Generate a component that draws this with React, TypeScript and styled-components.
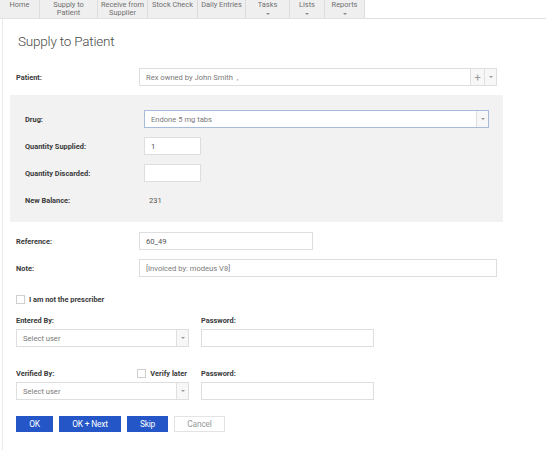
import React from "react";
import styled, { createGlobalStyle } from "styled-components";

const Global = createGlobalStyle`
  html, body { margin: 0; padding: 0; background: #fff; }
  body { font-family: Roboto, "Liberation Sans", Arial, sans-serif; color: #444; }
  * { box-sizing: border-box; }
`;

const Page = styled.div`
  width: 546px;
  height: 450px;
  overflow: hidden;
  background: #fff;
`;

const Nav = styled.nav`
  display: flex;
  height: 19px;
  border-bottom: 1px solid #e2e2e2;
`;

const NavItems = styled.div`
  display: flex;
  background: #efefef;
`;

const NavItem = styled.div<{ $w: number }>`
  width: ${(p) => p.$w}px;
  border-right: 1px solid #dcdcdc;
  display: flex;
  flex-direction: column;
  align-items: center;
  padding-top: 1px;
  font-size: 7.4px;
  line-height: 8px;
  color: #707070;
  text-align: center;
`;

const Caret = styled.span`
  display: block;
  width: 0;
  height: 0;
  margin-top: 4px;
  border-left: 2px solid transparent;
  border-right: 2px solid transparent;
  border-top: 2px solid #8a8a8a;
`;

const Body = styled.div`
  margin-left: 2px;
  border-left: 1px solid #e9e9e9;
  padding-left: 7px;
  height: 431px;
`;

const Content = styled.div`
  width: 493px;
`;

const Title = styled.h1`
  margin: 0;
  padding: 14px 0 0 8px;
  height: 49px;
  font-size: 13.5px;
  font-weight: 300;
  color: #4a4a4a;
  letter-spacing: -0.2px;
`;

const Row = styled.div<{ $label: number; $mt?: number }>`
  display: grid;
  grid-template-columns: ${(p) => p.$label}px 1fr;
  align-items: center;
  min-height: 18px;
  margin-top: ${(p) => p.$mt ?? 0}px;
`;

const Label = styled.label`
  font-size: 7.4px;
  font-weight: 700;
  color: #3a3a3a;
`;

const Outer = styled.div`
  padding: 0 6px;
`;

const Panel = styled.div`
  background: #f2f2f2;
  margin-top: 9px;
  padding: 15px 14px 13px 15px;
`;

const Field = styled.div<{ $w?: number; $focus?: boolean }>`
  position: relative;
  display: flex;
  align-items: center;
  height: 18px;
  width: ${(p) => (p.$w ? `${p.$w}px` : "100%")};
  background: #fff;
  border: 1px solid ${(p) => (p.$focus ? "#a9bbdc" : "#dedede")};
  font-size: 7.6px;
  color: #7a7a7a;
  padding-left: 6px;
`;

const FieldText = styled.span<{ $dark?: boolean }>`
  flex: 1;
  color: ${(p) => (p.$dark ? "#555" : "#7a7a7a")};
`;

const AddonBtn = styled.span<{ $w: number }>`
  width: ${(p) => p.$w}px;
  height: 100%;
  display: flex;
  align-items: center;
  justify-content: center;
  border-left: 1px solid #e0e0e0;
  background: #f7f7f7;
  color: #999;
  font-size: 11px;
`;

const SmallCaret = styled.span`
  width: 0;
  height: 0;
  border-left: 2px solid transparent;
  border-right: 2px solid transparent;
  border-top: 2px solid #999;
`;

const Value = styled.span`
  font-size: 7.6px;
  color: #555;
  padding-left: 5px;
`;

const CheckRow = styled.div<{ $mt?: number }>`
  display: flex;
  align-items: center;
  gap: 4px;
  margin-top: ${(p) => p.$mt ?? 0}px;
`;

const Box = styled.span`
  width: 9px;
  height: 9px;
  border: 1px solid #cfcfcf;
  background: #fff;
`;

const UserGrid = styled.div<{ $mt: number }>`
  display: grid;
  grid-template-columns: 173px 173px;
  column-gap: 12px;
  row-gap: 5px;
  margin-top: ${(p) => p.$mt}px;
`;

const UserHead = styled.div`
  display: flex;
  align-items: center;
  justify-content: space-between;
  height: 8px;
  padding-right: 2px;
`;

const Buttons = styled.div`
  display: flex;
  gap: 6px;
  margin-top: 16px;
`;

const Btn = styled.button<{ $w: number; $ghost?: boolean }>`
  width: ${(p) => p.$w}px;
  height: 16px;
  padding: 0;
  font-family: inherit;
  font-size: 8.4px;
  letter-spacing: -0.2px;
  border: 1px solid ${(p) => (p.$ghost ? "#e3e3e3" : "#2456c8")};
  background: ${(p) => (p.$ghost ? "#fff" : "#2456c8")};
  color: ${(p) => (p.$ghost ? "#9a9a9a" : "#fff")};
`;

const navItems: { t: string[]; w: number; caret?: boolean }[] = [
  { t: ["Home"], w: 40 },
  { t: ["Supply to", "Patient"], w: 58 },
  { t: ["Receive from", "Supplier"], w: 50 },
  { t: ["Stock Check"], w: 50 },
  { t: ["Daily Entries"], w: 48 },
  { t: ["Tasks"], w: 44, caret: true },
  { t: ["Lists"], w: 35, caret: true },
  { t: ["Reports"], w: 40, caret: true },
];

export default function App() {
  return (
    <Page>
      <Global />
      <Nav>
        <NavItems>
          {navItems.map((n) => (
            <NavItem key={n.t[0]} $w={n.w}>
              {n.t.map((l) => (
                <span key={l}>{l}</span>
              ))}
              {n.caret && <Caret />}
            </NavItem>
          ))}
        </NavItems>
      </Nav>
      <Body>
        <Content>
          <Title>Supply to Patient</Title>
          <Outer>
            <Row $label={123}>
              <Label>Patient:</Label>
              <Field>
                <FieldText>Rex owned by John Smith &nbsp;,</FieldText>
                <AddonBtn $w={14}>+</AddonBtn>
                <AddonBtn $w={12}>
                  <SmallCaret />
                </AddonBtn>
              </Field>
            </Row>
          </Outer>
          <Panel>
            <Row $label={119}>
              <Label>Drug:</Label>
              <Field $focus>
                <FieldText>Endone 5 mg tabs</FieldText>
                <AddonBtn $w={12}>
                  <SmallCaret />
                </AddonBtn>
              </Field>
            </Row>
            <Row $label={119} $mt={9}>
              <Label>Quantity Supplied:</Label>
              <Field $w={57}>
                <FieldText $dark>1</FieldText>
              </Field>
            </Row>
            <Row $label={119} $mt={9}>
              <Label>Quantity Discarded:</Label>
              <Field $w={57} />
            </Row>
            <Row $label={119} $mt={9}>
              <Label>New Balance:</Label>
              <Value>231</Value>
            </Row>
          </Panel>
          <Outer>
            <Row $label={123} $mt={10}>
              <Label>Reference:</Label>
              <Field $w={174}>
                <FieldText $dark>60_49</FieldText>
              </Field>
            </Row>
            <Row $label={123} $mt={9}>
              <Label>Note:</Label>
              <Field>
                <FieldText>[Invoiced by: modeus V8]</FieldText>
              </Field>
            </Row>
            <CheckRow $mt={18}>
              <Box />
              <Label>I am not the prescriber</Label>
            </CheckRow>
            <UserGrid $mt={12}>
              <UserHead>
                <Label>Entered By:</Label>
              </UserHead>
              <UserHead>
                <Label>Password:</Label>
              </UserHead>
              <Field>
                <FieldText>Select user</FieldText>
                <AddonBtn $w={12}>
                  <SmallCaret />
                </AddonBtn>
              </Field>
              <Field />
            </UserGrid>
            <UserGrid $mt={22}>
              <UserHead>
                <Label>Verified By:</Label>
                <CheckRow>
                  <Box />
                  <Label>Verify later</Label>
                </CheckRow>
              </UserHead>
              <UserHead>
                <Label>Password:</Label>
              </UserHead>
              <Field>
                <FieldText>Select user</FieldText>
                <AddonBtn $w={12}>
                  <SmallCaret />
                </AddonBtn>
              </Field>
              <Field />
            </UserGrid>
            <Buttons>
              <Btn $w={37}>OK</Btn>
              <Btn $w={62}>OK + Next</Btn>
              <Btn $w={41}>Skip</Btn>
              <Btn $w={51} $ghost>
                Cancel
              </Btn>
            </Buttons>
          </Outer>
        </Content>
      </Body>
    </Page>
  );
}
